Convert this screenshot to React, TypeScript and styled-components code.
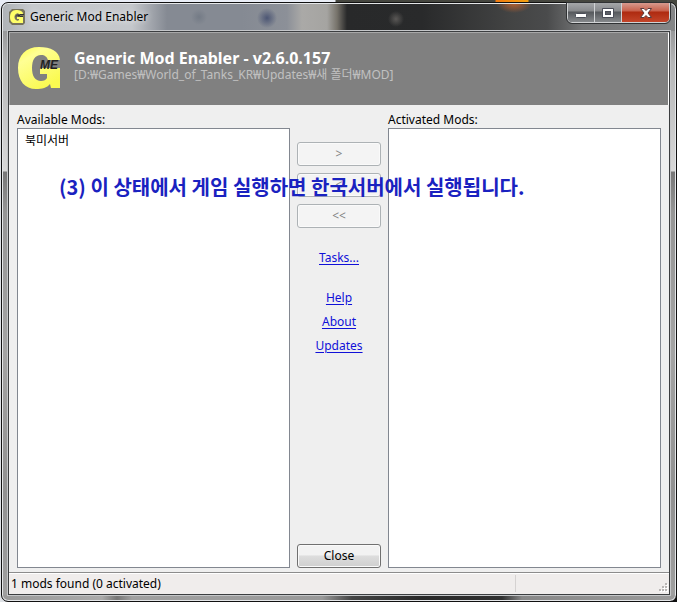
import React from 'react';
import styled, { createGlobalStyle, css } from 'styled-components';

const uiFont = '"Noto Sans", "Noto Sans CJK KR", sans-serif';

const GlobalStyle = createGlobalStyle`
  *, *::before, *::after { box-sizing: border-box; }
  body { margin: 0; font: 12px/16px ${uiFont}; color: #000; }
`;

const Desktop = styled.div`
  display: flex;
  min-height: 100vh;
  padding: 2px 0 0 1px;
  background:
    linear-gradient(90deg, transparent 495px, #f07a10 496px, #f5a010 528px, transparent 529px) 0 0 / 100% 2px no-repeat,
    linear-gradient(90deg, #e9edf6 0 335px, #45463f 336px) 0 0 / 100% 8px no-repeat,
    linear-gradient(90deg, #dfe2e6 0 8px, #101010 9px);
`;

const Window = styled.section`
  position: relative;
  flex: 1;
  display: flex;
  flex-direction: column;
  padding: 0 6px 6px;
  border: 1px solid #111;
  border-radius: 7px;
  box-shadow: inset 0 0 0 1px #e4e6e8;
  background:
    radial-gradient(ellipse 18px 10px at 512px 0, #b9602e, transparent) 0 0 / 100% 28px no-repeat,
    radial-gradient(circle 8px at 197px 14px, #747b86, transparent) 0 0 / 100% 28px no-repeat,
    radial-gradient(circle 10px at 265px 15px, #4c5674, transparent) 0 0 / 100% 28px no-repeat,
    radial-gradient(circle 8px at 394px 16px, #5a5856, transparent) 0 0 / 100% 28px no-repeat,
    linear-gradient(90deg, #aeb2b6 0, #c6c9cd 30px, #c4c7cb 130px, #858a93 165px, #858a93 240px, #8c9098 285px, #aaa9a7 300px, #a5a4a1 325px, #77736b 335px, #28292a 345px, #292a2b 420px, #434444 510px, #4a4b4c 545px, #747576 580px, #858687 100%) 0 0 / 100% 28px no-repeat,
    linear-gradient(90deg, #999 0, #aaa 100px, #777 115px, #a0a0a0 130px, #999 320px, #444 350px, #292929 420px, #303030 500px, #888 520px, #9b9b9b 100%) 0 100% / 100% 6px no-repeat,
    linear-gradient(#98999a 28px, #b5b6b7 60px, #d8d8d8 168px, #777 169px, #969696 210px, #a4a4a4 350px, #919191 490px, #a0a0a0 100%);
`;

const TitleBar = styled.header`
  display: flex;
  align-items: flex-start;
  justify-content: space-between;
  height: 28px;
`;

const TitleText = styled.div`
  display: flex;
  align-items: center;
  gap: 5px;
  height: 27px;
  padding-left: 1px;
`;

const Caption = styled.span`
  text-shadow: 0 0 6px #fff;
`;

const WindowButtons = styled.div`
  display: flex;
  height: 20px;
  border: 1px solid #d0d2d4;
  border-top: 0;
  border-radius: 0 0 5px 5px;
  outline: 1px solid #303234;
  overflow: hidden;
`;

const WindowButton = styled.button<{ $close?: boolean }>`
  display: flex;
  align-items: center;
  justify-content: center;
  width: ${p => (p.$close ? 47 : 27)}px;
  padding: 0;
  border: 0;
  border-right: ${p => (p.$close ? 0 : 1)}px solid #d0d2d4;
  background: ${p => p.$close
    ? 'linear-gradient(#d79a8e 0, #c8604b 8px, #ae2a10 9px, #c3452a 100%)'
    : 'linear-gradient(#a5a7a9 0, #87898c 8px, #55585c 9px, #85888b 100%)'};
`;

const Client = styled.div`
  flex: 1;
  display: flex;
  flex-direction: column;
  border: 1px solid #3c3e40;
  outline: 1px solid #c4c6c8;
  background: #efefef;
`;

const Banner = styled.div`
  display: flex;
  align-items: flex-start;
  gap: 12px;
  height: 73px;
  padding: 14px 8px 0;
  border: 1px solid #a8a8a8;
  border-right-color: #fff;
  border-bottom: 0;
  background: #808080;
`;

const BannerTitle = styled.h1`
  margin: 0;
  font-size: 16px;
  line-height: 22px;
  color: #fff;
`;

const BannerPath = styled.p`
  margin: 0;
  line-height: 12px;
  color: #c0c0c0;
`;

const Body = styled.main`
  flex: 1;
  display: grid;
  grid-template-columns: 1fr 84px 1fr;
  gap: 7px;
  padding: 7px 8px 4px;
`;

const ListColumn = styled.div`
  display: flex;
  flex-direction: column;
`;

const ListBox = styled.select`
  flex: 1;
  width: 100%;
  padding: 2px 5px;
  border: 1px solid #828790;
  border-radius: 0;
  outline: 0;
  background: #fff;
  color: #000;
  font: inherit;
  overflow: hidden;
`;

const Actions = styled.div`
  display: flex;
  flex-direction: column;
  align-items: center;
  padding: 30px 0 0;
`;

const MoveButtons = styled.div`
  display: grid;
  gap: 7px;
  width: 100%;
`;

const PushButton = styled.button`
  display: block;
  width: 100%;
  height: 24px;
  padding: 0;
  border: 1px solid #707070;
  border-radius: 3px;
  box-shadow: inset 0 0 0 1px #fafafa;
  background: linear-gradient(#f2f2f2 0 45%, #dddddd 50%, #cfcfcf);
  font: inherit;
  color: #000;

  &:disabled {
    border-color: #adb2b5;
    background: #f4f4f4;
    color: #838383;
  }
`;

const Links = styled.nav`
  display: grid;
  justify-items: center;
  gap: 8px;
  margin-top: 22px;
`;

const TextLink = styled.a<{ $spaced?: boolean }>`
  color: #1010d8;
  text-underline-offset: 2px;
  ${p => p.$spaced && css`margin-bottom: 16px;`}
`;

const CloseSlot = styled.div`
  width: 100%;
  margin-top: auto;
`;

const StatusBar = styled.footer`
  display: grid;
  grid-template-columns: 1fr 154px;
  height: 22px;
  border-top: 1px solid #8c8c8c;
  box-shadow: inset 0 1px #fff;
  background: #f0edec;
`;

const StatusCell = styled.div`
  display: flex;
  align-items: center;
  padding: 0 2px;
`;

const GripCell = styled(StatusCell)`
  align-items: flex-end;
  justify-content: flex-end;
  margin: 2px 0;
  padding: 0 1px 0 0;
  border-left: 1px solid #d5d2d1;
`;

const Note = styled.p`
  position: absolute;
  top: 172px;
  left: 57px;
  margin: 0;
  font: bold 20px/24px "Noto Sans CJK KR", sans-serif;
  color: #1a22c0;
  white-space: nowrap;
  pointer-events: none;
`;

const Logo = () => (
  <svg width="44" height="44" viewBox="0 0 44 44" role="img" aria-label="GME">
    <defs>
      <linearGradient id="gold" x1="0" y1="0" x2="0.6" y2="1">
        <stop offset="0" stopColor="#ffff48" />
        <stop offset="0.3" stopColor="#ffff94" />
        <stop offset="1" stopColor="#fafa50" />
      </linearGradient>
    </defs>
    <path
      d="M42 13H30C29 10 27 8 23 8C17 8 14 13 14 21C14 29 17 34 23 34C26 34 28 33 29 31V27H22V21H42V41H33L32 37C29 41 24 42 18 42C7 42 0 34 0 21C0 8 8 0 21 0C33 0 41 4 42 13Z"
      fill="url(#gold)"
    />
    <text x="22" y="22" fontFamily="Liberation Sans" fontSize="12" fontWeight="bold" fontStyle="italic" fill="#222">ME</text>
  </svg>
);

const AppIcon = () => (
  <svg width="16" height="16" viewBox="0 0 16 16" aria-hidden="true">
    <path d="M3 0H14L16 2V14L14 16H3L0 13V3Z" fill="#77735c" />
    <path d="M14 5H10C9 4 8 4 7 5C5 6 5 10 7 11C8 12 9 12 10 11V10H8V8H14V14H5C3 14 1 12 1 8C1 4 3 1 7 1C11 1 14 2 14 5Z" fill="#ffff68" />
    <path d="M7 7.500L9 5.500L10 7.500L11 5.500H15M11 7.500H14" fill="none" stroke="#333" />
  </svg>
);

const Grip = () => (
  <svg width="9" height="9" viewBox="0 0 9 9" aria-hidden="true">
    {[[6, 0], [3, 3], [6, 3], [0, 6], [3, 6], [6, 6]].map(([x, y]) => (
      <g key={`${x}-${y}`}>
        <rect x={x + 1} y={y + 1} width="2" height="2" fill="#fff" />
        <rect x={x} y={y} width="2" height="2" fill="#b8b5b4" />
      </g>
    ))}
  </svg>
);

export default function App() {
  return (
    <>
      <GlobalStyle />
      <Desktop>
        <Window aria-label="Generic Mod Enabler">
          <TitleBar>
            <TitleText>
              <AppIcon />
              <Caption>Generic Mod Enabler</Caption>
            </TitleText>
            <WindowButtons>
              <WindowButton type="button" aria-label="Minimize">
                <svg width="12" height="12" viewBox="0 0 12 12">
                  <rect x="0.5" y="6.5" width="11" height="4" rx="1" fill="#fff" stroke="#4b4e58" />
                </svg>
              </WindowButton>
              <WindowButton type="button" aria-label="Maximize">
                <svg width="12" height="10" viewBox="0 0 12 10">
                  <rect width="12" height="10" rx="1" fill="#4b4e58" />
                  <rect x="2" y="2" width="8" height="6" fill="none" stroke="#fff" strokeWidth="2" />
                  <rect x="4" y="4" width="4" height="2" fill="#5c5f66" />
                </svg>
              </WindowButton>
              <WindowButton type="button" aria-label="Close window" $close>
                <svg width="12" height="10" viewBox="0 0 12 10">
                  <path d="M0.5 0.5H4L6 2.5L8 0.5H11.5L8 5L11.5 9.5H8L6 7.5L4 9.5H0.5L4 5Z" fill="#fff" stroke="#5b3a3c" />
                </svg>
              </WindowButton>
            </WindowButtons>
          </TitleBar>

          <Client>
            <Banner>
              <Logo />
              <div>
                <BannerTitle>Generic Mod Enabler - v2.6.0.157</BannerTitle>
                <BannerPath>[D:₩Games₩World_of_Tanks_KR₩Updates₩새 폴더₩MOD]</BannerPath>
              </div>
            </Banner>

            <Body>
              <ListColumn>
                <label htmlFor="available">Available Mods:</label>
                <ListBox id="available" multiple>
                  <option>북미서버</option>
                </ListBox>
              </ListColumn>

              <Actions>
                <MoveButtons>
                  <PushButton type="button" disabled>&gt;</PushButton>
                  <PushButton type="button" disabled>&lt;</PushButton>
                  <PushButton type="button" disabled>&lt;&lt;</PushButton>
                </MoveButtons>
                <Links>
                  <TextLink href="#tasks" $spaced>Tasks...</TextLink>
                  <TextLink href="#help">Help</TextLink>
                  <TextLink href="#about">About</TextLink>
                  <TextLink href="#updates">Updates</TextLink>
                </Links>
                <CloseSlot>
                  <PushButton type="button">Close</PushButton>
                </CloseSlot>
              </Actions>

              <ListColumn>
                <label htmlFor="activated">Activated Mods:</label>
                <ListBox id="activated" multiple />
              </ListColumn>
            </Body>

            <StatusBar>
              <StatusCell>1 mods found (0 activated)</StatusCell>
              <GripCell><Grip /></GripCell>
            </StatusBar>
          </Client>

          <Note>(3) 이 상태에서 게임 실행하면 한국서버에서 실행됩니다.</Note>
        </Window>
      </Desktop>
    </>
  );
}
